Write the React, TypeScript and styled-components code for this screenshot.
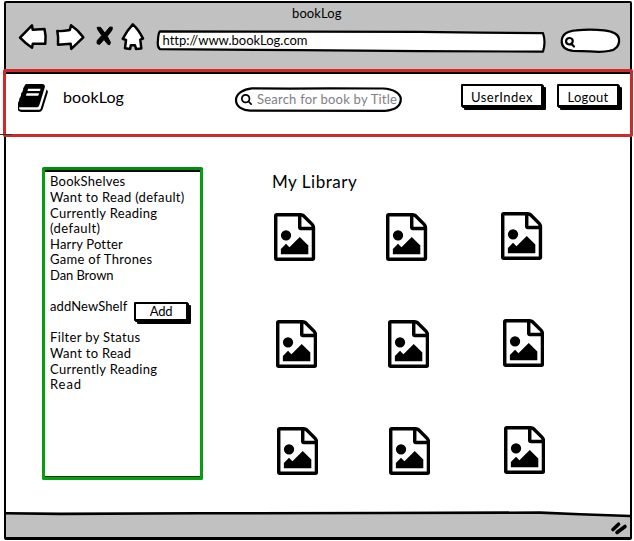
import React from 'react';
import styled, { createGlobalStyle } from 'styled-components';

const GlobalStyle = createGlobalStyle`
  * { box-sizing: border-box; }
  body { margin: 0; background: #fff; overflow: hidden; }
`;

const ink = '#000';
const chromeGrey = '#c1c1c1';

const Page = styled.div`
  width: 634px;
  height: 541px;
  padding: 1px 2px 1px 4px;
  background: #fff;
  color: ${ink};
  font-family: Lato, 'Open Sans', sans-serif;
  font-size: 13px;
`;

const BrowserWindow = styled.div`
  display: flex;
  flex-direction: column;
  width: 628px;
  height: 539px;
  border: 2px solid ${ink};
  border-bottom-width: 3px;
  border-radius: 2px;
`;

const Text = styled.span<{ $spacing?: number }>`
  white-space: nowrap;
  letter-spacing: ${p => p.$spacing ?? 0}px;
`;

/* Browser chrome */

const Chrome = styled.header`
  height: 66px;
  background: ${chromeGrey};
`;

const WindowTitle = styled.div`
  height: 19px;
  padding: 2px 0 0 286px;
  line-height: 16px;
`;

const Toolbar = styled.div`
  display: flex;
  height: 32px;
  padding-left: 10px;
`;

const NavButton = styled.button<{ $width: number; $gap: number }>`
  display: block;
  width: ${p => p.$width}px;
  height: 32px;
  margin: 0 ${p => p.$gap}px 0 0;
  padding: 0;
  border: 0;
  background: none;
`;

const Glyph = styled.svg`
  display: block;
  width: 100%;
  height: 100%;
  fill: #fff;
  stroke: ${ink};
  stroke-width: 2.5;
  stroke-linejoin: round;
  stroke-linecap: round;
`;

const Sketched = styled.div<{ $width: number; $height: number }>`
  position: relative;
  flex: none;
  width: ${p => p.$width}px;
  height: ${p => p.$height}px;
`;

const Outline = styled(Glyph)`
  position: absolute;
  inset: 0;
  stroke-width: 2.2;
`;

const AddressBar = styled(Sketched)`
  margin-right: 10px;
  padding: 9px 0 0 8.5px;
  line-height: 18px;
`;

const FieldText = styled(Text)`
  position: relative;
`;

/* Application header */

const AppHeader = styled.section`
  position: relative;
  flex: none;
  height: 68px;
  margin: 0 -3px;
  border: 3px solid #cf2a2a;
  border-radius: 2px;

  /* pen stroke that overshoots the window's left edge */
  &::before {
    content: '';
    position: absolute;
    left: -6px;
    bottom: -1px;
    width: 12px;
    height: 1px;
    background: #333;
  }
`;

const HeaderRow = styled.div`
  display: flex;
  align-items: flex-start;
  height: 62px;
  padding: 10px 0 0 12px;
  border-top: 2px solid ${ink};
`;

const BookIcon = styled.svg`
  flex: none;
  width: 30px;
  height: 28px;
  fill: ${ink};
`;

const Brand = styled.h1`
  width: 171px;
  margin: 2px 0 0 15px;
  font-size: 16px;
  font-weight: 400;
  line-height: 22px;
`;

const SearchField = styled(Sketched)`
  display: flex;
  align-items: center;
  margin: 2px 59px 0 0;
  padding: 0 0 1px 7px;
  color: #7e7e86;
`;

const SearchIcon = styled.svg`
  position: relative;
  width: 11px;
  height: 11px;
  margin: 1px 5px 0 0;
  fill: ${ink};
`;

const SketchButton = styled.button<{ $width: number; $height?: number }>`
  flex: none;
  display: flex;
  align-items: center;
  justify-content: center;
  width: ${p => p.$width}px;
  height: ${p => p.$height ?? 23}px;
  margin: 0;
  padding: 2px 0 0;
  border: 2px solid ${ink};
  border-radius: 1px;
  background: #fff;
  box-shadow: 1px 1px 0 ${ink}, 3px 3px 0 ${ink};
  color: ${ink};
  font: inherit;
`;

const HeaderActions = styled.div`
  display: flex;
  gap: 14px;
`;

/* Main area */

const Main = styled.main`
  display: flex;
  flex: 1;
  min-height: 0;
`;

const Sidebar = styled.aside`
  flex: none;
  width: 161px;
  height: 313px;
  margin: 30px 0 0 36px;
  border: 3px solid #05a010;
  border-top-color: #078a10;
  border-radius: 2px;
`;

const SidebarBody = styled.div`
  height: 307px;
  padding: 2.32px 0 0 5px;
  border-top: 2px solid #0b0b0b;
  border-bottom: 1px solid #123a14;
`;

const ShelfGroup = styled.ul`
  margin: 0 0 15.62px;
  padding: 0;
  list-style: none;
`;

const ShelfItem = styled.li`
  height: 15.62px;
  line-height: 15.62px;
`;

const AddShelf = styled.div`
  display: flex;
  align-items: flex-start;
  height: 15.62px;
  margin-bottom: 15.62px;
  line-height: 15.62px;
`;

const ShelfName = styled.div`
  width: 84px;
`;

const AddSlot = styled.div`
  padding-top: 2.4px;
`;

const Library = styled.section`
  margin: 32px 0 0 68px;
`;

const LibraryTitle = styled.h2`
  height: 44px;
  margin: 0 0 0 1px;
  padding-top: 2px;
  font-size: 17px;
  font-weight: 400;
  line-height: 22px;
`;

const BookRow = styled.div<{ $indent: number }>`
  display: grid;
  grid-template-columns: 112px 115px 42px;
  align-items: start;
  height: 107px;
  padding-left: ${p => p.$indent}px;
`;

const Cover = styled.svg<{ $lift: number }>`
  width: 41.2px;
  height: 48px;
  margin-top: ${p => -p.$lift}px;
  fill: ${ink};
`;

const StatusBar = styled.footer`
  flex: none;
  height: 26px;
  background: ${chromeGrey};
`;

const StatusArt = styled.svg`
  display: block;
  width: 624px;
  height: 26px;
`;

const Book = () => (
  <BookIcon viewBox="60 128 1612 1536" preserveAspectRatio="none">
    <path d="M1639 478q40 57 18 129l-275 906q-19 64-76.500 107.500t-122.500 43.500h-923q-77 0-148.500-53.500t-99.500-131.500q-24-67-2-127 0-4 3-27t4-37q1-8-3-21.500t-3-19.500q2-11 8-21t16.500-23.500 16.500-23.500q23-38 45-91.500t30-91.500q3-10 .5-30t-.5-28q3-11 17-28t17-23q21-36 42-92t25-90q1-9-2.500-32t.5-28q4-13 22-30.500t22-22.500q19-26 42.500-84.500t27.500-96.500q1-8-3-25.500t-2-26.500q2-8 9-18t18-23 17-21q8-12 16.500-30.500t15-35 16-36 19.500-32 26.500-23.500 36-11.500 47.500 5.500l-1 3q38-9 51-9h761q74 0 114 56t18 130l-274 906q-36 119-71.500 153.500t-128.500 34.500h-869q-27 0-38 15-11 16-1 43 24 70 144 70h923q29 0 56-15.500t35-41.500l300-987q7-22 5-57 38 15 59 43zm-1064 2q-4 13 2 22.500t20 9.500h608q13 0 25.500-9.500t16.500-22.500l21-64q4-13-2-22.500t-20-9.500h-608q-13 0-25.500 9.500t-16.500 22.500zm-83 256q-4 13 2 22.500t20 9.500h608q13 0 25.500-9.500t16.500-22.500l21-64q4-13-2-22.500t-20-9.500h-608q-13 0-25.500 9.500t-16.500 22.500z" />
  </BookIcon>
);

const BookCover = ({ lift }: { lift: number }) => (
  <Cover $lift={lift} viewBox="128 0 1536 1792">
    <path d="M1596 380q28 28 48 76t20 88v1152q0 40-28 68t-68 28h-1344q-40 0-68-28t-28-68v-1600q0-40 28-68t68-28h896q40 0 88 20t76 48zm-444-244v376h376q-10-29-22-41l-313-313q-12-12-41-22zm384 1528v-1024h-416q-40 0-68-28t-28-68v-416h-768v1536h1280zm-128-448v320h-1024v-192l192-192 128 128 384-384zm-832-192q-80 0-136-56t-56-136 56-136 136-56 136 56 56 136-56 136-136 56z" />
  </Cover>
);

type Entry = [label: string, spacing: number];

const shelves: Entry[] = [
  ['BookShelves', 0.24],
  ['Want to Read (default)', 0.3],
  ['Currently Reading', 0.32],
  ['(default)', 0.42],
  ['Harry Potter', 0.16],
  ['Game of Thrones', 0.31],
  ['Dan Brown', -0.08],
];

const statuses: Entry[] = [
  ['Filter by Status', 0.35],
  ['Want to Read', 0.28],
  ['Currently Reading', 0.32],
  ['Read', 0.9],
];

const List = ({ entries }: { entries: Entry[] }) => (
  <ShelfGroup>
    {entries.map(([label, spacing]) => (
      <ShelfItem key={label}>
        <Text $spacing={spacing}>{label}</Text>
      </ShelfItem>
    ))}
  </ShelfGroup>
);

export default function App() {
  return (
    <Page>
      <GlobalStyle />
      <BrowserWindow>
        <Chrome>
          <WindowTitle>
            <Text $spacing={0.1}>bookLog</Text>
          </WindowTitle>
          <Toolbar>
            <NavButton $width={34} $gap={4} aria-label="Back">
              <Glyph viewBox="16 22 34 32">
                <path d="M20 37.7L32 25.3L32.7 29.8L44.5 29Q46.3 36 45.3 43.8L32.8 43.7L32 47.8Q26 44 20 37.7Z" />
              </Glyph>
            </NavButton>
            <NavButton $width={34} $gap={4} aria-label="Forward">
              <Glyph viewBox="54 22 34 32">
                <path d="M57.3 31Q63 31.5 69.8 30L71 25.3Q78 30 83.3 37.3L71.3 48.8L70.7 43.8L58 44.7Q58.6 37 57.3 31Z" />
              </Glyph>
            </NavButton>
            <NavButton $width={24} $gap={2} aria-label="Stop">
              <Glyph viewBox="92 22 24 32">
                <path
                  fill="#000"
                  strokeWidth="1"
                  d="M97.500 27.300L100.500 27.300L104.800 33L109.800 27L112.300 27.200L112 30L107.300 36.300L110.500 42.500L109.500 44.800L107.800 44.300L104 39.500L99.500 44.500L97 43.500L97.300 40.500L101.800 35.500L98 30Z"
                />
              </Glyph>
            </NavButton>
            <NavButton $width={30} $gap={6} aria-label="Home">
              <Glyph viewBox="118 22 30 32">
                <path d="M132.8 24.3Q139 30 143 38.6L140.3 39.6L141.3 48.5L136 48.9L135 45.3L130.8 45.3L130.2 48.9L125 48.2L126 40L122.7 38.8Q127 30.5 132.8 24.3Z" />
              </Glyph>
            </NavButton>
            <AddressBar $width={394} $height={32}>
              <Outline viewBox="154 22 394 32">
                <path d="M160 31.3L300 31.7L420 31.8L480 32.6L543 33.2Q546 42 543 51.6L420 51.2L300 50.1L160 49.2Q157 47 158 40Q158.300 33 160 31.3Z" />
              </Outline>
              <FieldText $spacing={-0.02}>http://www.bookLog.com</FieldText>
            </AddressBar>
            <Sketched $width={66} $height={32}>
              <Outline viewBox="558 22 66 32">
                <path d="M561.7 41C562 34 568 31 576 30.4Q590 29 604 30.4C613 31.5 618.500 34 619 39C619.800 46 615 50 610 50.700Q602 52.500 590 51.300L573 50.900C565 50 561.500 46 561.700 41Z" />
                <path fill="none" d="M566 41Q566.500 37.800 570 38Q573.300 38.600 572.600 42Q571.500 45 568.300 44.200Q565.900 43.500 566 41M571.500 44L574 46.500" />
              </Outline>
            </Sketched>
          </Toolbar>
        </Chrome>

        <AppHeader>
          <HeaderRow>
            <Book />
            <Brand>
              <Text $spacing={0.12}>bookLog</Text>
            </Brand>
            <SearchField $width={168} $height={26}>
              <Outline viewBox="234 86 168 26">
                <path d="M252 88.300C243 89 236 94 236 100C236 107 243 110.300 250 110.600L385 110.800C395 110 400.800 106 400.800 99C400.500 93 393 89 383 88.500L330 88.300L290 88.600Z" />
              </Outline>
              <SearchIcon viewBox="64 128 1664 1664">
                <path d="M1216 832q0-185-131.500-316.500t-316.500-131.500-316.500 131.500-131.500 316.500 131.500 316.500 316.500 131.500 316.500-131.500 131.500-316.500zm512 832q0 52-38 90t-90 38q-54 0-90-38l-343-342q-179 124-399 124-143 0-273.500-55.500t-225-150-150-225-55.500-273.500 55.500-273.500 150-225 225-150 273.500-55.500 273.500 55.500 225 150 150 225 55.500 273.500q0 220-124 399l343 343q37 37 37 90z" />
              </SearchIcon>
              <FieldText $spacing={0.22}>Search for book by Title</FieldText>
            </SearchField>
            <HeaderActions>
              <SketchButton $width={82}>
                <Text $spacing={0.48}>UserIndex</Text>
              </SketchButton>
              <SketchButton $width={62}>
                <Text $spacing={0.25}>Logout</Text>
              </SketchButton>
            </HeaderActions>
          </HeaderRow>
        </AppHeader>

        <Main>
          <Sidebar>
            <SidebarBody>
              <List entries={shelves} />
              <AddShelf>
                <ShelfName>
                  <Text $spacing={0.1}>addNewShelf</Text>
                </ShelfName>
                <AddSlot>
                  <SketchButton $width={54} $height={19}>
                    <Text $spacing={-0.3}>Add</Text>
                  </SketchButton>
                </AddSlot>
              </AddShelf>
              <List entries={statuses} />
            </SidebarBody>
          </Sidebar>
          <Library>
            <LibraryTitle>
              <Text $spacing={0.52}>My Library</Text>
            </LibraryTitle>
            {[3.4, 4.6, 5.6].map(indent => (
              <BookRow key={indent} $indent={indent}>
                {[0, 0, 0.8].map((lift, col) => (
                  <BookCover key={col} lift={lift} />
                ))}
              </BookRow>
            ))}
          </Library>
        </Main>

        <StatusBar>
          <StatusArt viewBox="6 511 624 26">
            <path fill="#fff" d="M6 511H630V516L560 513L6 513Z" />
            <path fill="none" stroke="#000" strokeWidth="2.6" d="M6 513.300L60 513.900L200 513.300L380 513L540 512.600L580 514.300L630 516" />
            <path stroke="#000" strokeWidth="3.6" strokeLinecap="round" d="M613 529.500L618.500 524.200M617 532.500L625 526.500" />
          </StatusArt>
        </StatusBar>
      </BrowserWindow>
    </Page>
  );
}
